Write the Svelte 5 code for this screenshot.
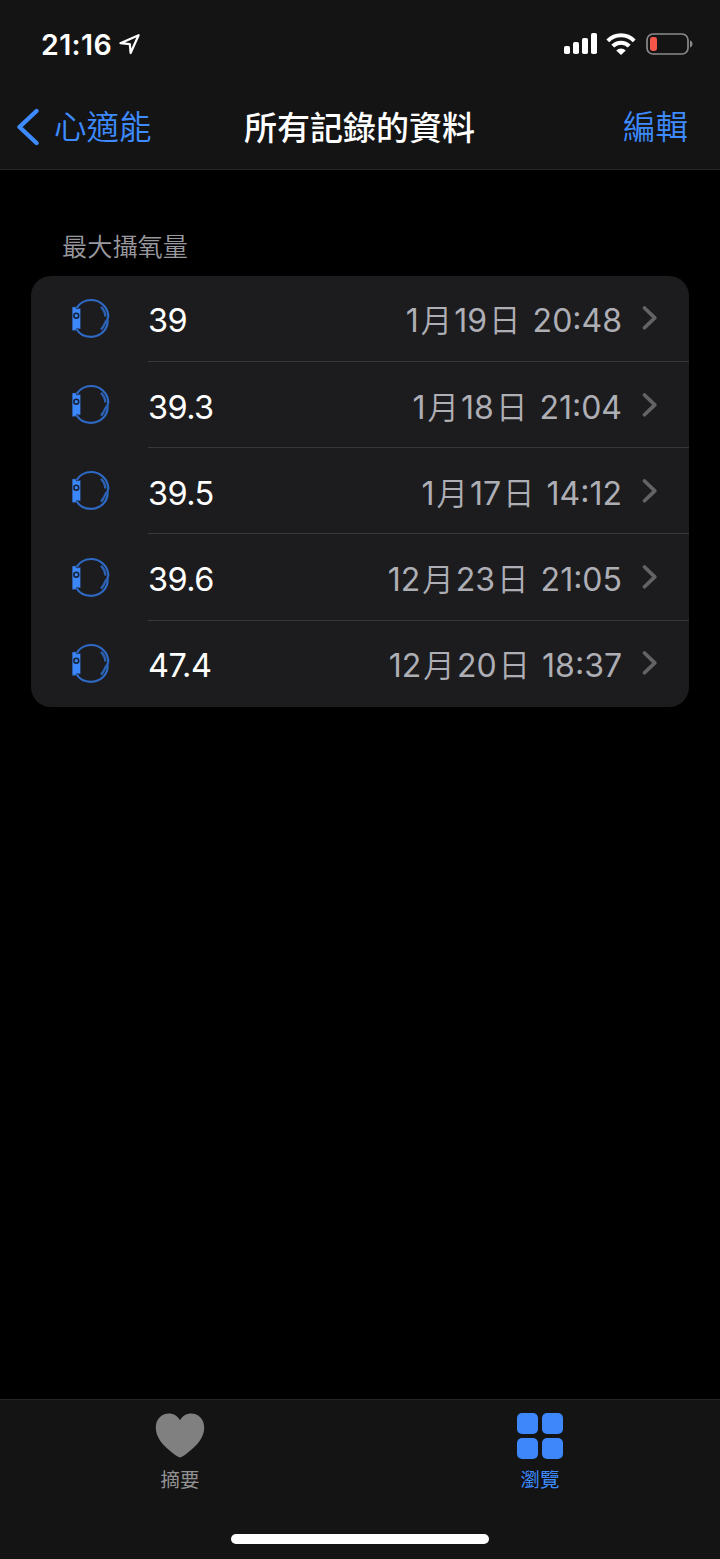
<script lang="ts">
  interface Sample {
    value: string;
    month: number;
    day: number;
    time: string;
  }

  const samples: Sample[] = [
    { value: '39',   month: 1,  day: 19, time: '20:48' },
    { value: '39.3', month: 1,  day: 18, time: '21:04' },
    { value: '39.5', month: 1,  day: 17, time: '14:12' },
    { value: '39.6', month: 12, day: 23, time: '21:05' },
    { value: '47.4', month: 12, day: 20, time: '18:37' },
  ];
</script>

<div class="screen">
  <header>
    <div class="status">
      <span class="clock">21:16</span>
      <svg class="location" width="22" height="22" viewBox="0 0 22 22">
        <path d="M1.4 10.2 19.6 2.2 11.6 20 10.8 11.2Z" />
      </svg>
      <svg class="signal" width="34" height="22" viewBox="0 0 34 22">
        <rect x="0" y="13" width="6" height="8" rx="1.8" />
        <rect x="9" y="9" width="6" height="12" rx="1.8" />
        <rect x="18" y="5" width="6" height="16" rx="1.8" />
        <rect x="27" y="0" width="6" height="21" rx="1.8" />
      </svg>
      <svg class="wifi" width="30" height="22" viewBox="0 0 30 22">
        <path d="M1.8 7.8A18.6 18.6 0 0 1 28.2 7.8" />
        <path d="M6.8 13.2A11.4 11.4 0 0 1 23.2 13.2" />
        <path class="dot" d="M10.2 17.4A7 7 0 0 1 19.8 17.4L15 22Z" />
      </svg>
      <svg class="battery" width="48" height="24" viewBox="0 0 48 24">
        <rect class="shell" x="1" y="2" width="41" height="20" rx="6" />
        <rect class="level" x="4" y="5" width="7" height="14" rx="2.4" />
        <path class="cap" d="M44 8.2Q46.600 9.500 46.600 12T44 15.8Z" />
      </svg>
    </div>
    <nav>
      <button class="back">
        <svg width="24" height="38" viewBox="0 0 24 38">
          <path d="M21.5 3 4.5 19 21.5 35" />
        </svg>
        <span>心適能</span>
      </button>
      <h1>所有記錄的資料</h1>
      <button class="edit">編輯</button>
    </nav>
  </header>

  <main>
    <h2>最大攝氧量</h2>
    <ul>
      {#each samples as s}
        <li>
          <svg class="watch" width="40" height="42" viewBox="0 0 40 42">
            <path class="band" d="M5.500 10.200C8.500 5 14.500 2 20 2C29.500 2 36.800 9.500 37.300 17.800C37.400 19.600 36 20.500 36.600 22.500C37 31.500 29.500 38.800 20 38.800C14.500 38.800 8.500 36.500 5.500 31" />
            <path class="clasp" d="M30 8.8C32.8 11.5 34.3 15 34.3 18.5M36.6 21.8C33 24 34.5 27 30 31.6" />
            <path class="case" d="M1.200 9H3.400L4.200 8.400 5.600 11 9.500 10.300V31L5.600 30.400 4.400 32.800 3.400 32.400H1.200Z" />
            <circle class="crown" cx="5.3" cy="17.7" r="2.4" />
          </svg>
          <div class="cell">
            <span class="value">{s.value}</span>
            <span class="date">{s.month}<b>月</b>{s.day}<b>日</b> {s.time}</span>
            <svg class="chevron" width="16" height="26" viewBox="0 0 16 26">
              <path d="M2.5 3 12.8 12.9 2.5 22.8" />
            </svg>
          </div>
        </li>
      {/each}
    </ul>
  </main>

  <footer>
    <div class="tabs">
      <div class="tab">
        <svg width="50" height="48" viewBox="0 0 50 48">
          <path d="M25 45.5C23.5 45.5 20.5 43.2 17 40.5C8 33.5 .8 25.5 .8 15.5C.8 7.3 6.5 1.5 13.8 1.5C18.7 1.5 22.8 4 25 8.3C27.2 4 31.3 1.5 36.2 1.5C43.5 1.5 49.2 7.3 49.2 15.5C49.2 25.5 42 33.5 33 40.5C29.5 43.2 26.5 45.5 25 45.5Z" />
        </svg>
        <span>摘要</span>
      </div>
      <div class="tab active">
        <svg width="50" height="48" viewBox="0 0 50 48">
          <rect x="2" y="1" width="21" height="21" rx="5" />
          <rect x="27" y="1" width="21" height="21" rx="5" />
          <rect x="2" y="26" width="21" height="21" rx="5" />
          <rect x="27" y="26" width="21" height="21" rx="5" />
        </svg>
        <span>瀏覽</span>
      </div>
    </div>
    <div class="home"></div>
  </footer>
</div>

<style>
  :global(body) { margin: 0; background: #000; }
  .screen {
    width: 720px; height: 1559px; box-sizing: border-box;
    display: flex; flex-direction: column; overflow: hidden;
    background: #000; color: #fff;
    font-family: Inter, "Noto Sans CJK TC", sans-serif;
  }
  svg { display: block; flex: none; }
  button { border: 0; padding: 0; background: none; font: inherit; color: #3d8bff; }

  header {
    height: 170px; box-sizing: border-box;
    background: #141414; border-bottom: 1px solid #262627;
  }
  .status { display: flex; align-items: center; height: 88px; padding: 0 26px 0 41px; }
  .clock { font-size: 28.5px; font-weight: 600; letter-spacing: .4px; padding-top: 1px; }
  .location { margin-left: 7px; fill: none; stroke: #fff; stroke-width: 2.2; stroke-linejoin: round; }
  .signal { margin-left: auto; fill: #fff; }
  .wifi { margin-left: 8px; fill: none; stroke: #fff; stroke-width: 4; }
  .wifi .dot { fill: #fff; stroke: none; }
  .battery { margin-left: 10px; }
  .shell { fill: none; stroke: #8a8a8a; stroke-width: 1.7; }
  .level { fill: #f4564a; }
  .cap { fill: #8a8a8a; }

  nav {
    display: grid; grid-template-columns: 1fr auto 1fr; align-items: center;
    height: 78px; padding: 0 32px 0 15px;
  }
  .back { display: flex; align-items: center; gap: 15px; justify-self: start; }
  .back span, .edit { padding-top: 2px; font-size: 32.5px; font-weight: 350; line-height: 48px; }
  .back path { fill: none; stroke: #3d8bff; stroke-width: 4.4; stroke-linecap: round; stroke-linejoin: round; }
  .edit { justify-self: end; }
  h1 { margin: 0 -8px 0 8px; padding-top: 2px; font-size: 33px; font-weight: 500; line-height: 48px; }

  main { flex: 1; padding: 57px 31px 0; }
  h2 {
    margin: 0 0 8.6px 31px; font-size: 25.2px; line-height: 40px;
    font-weight: 350; color: #98989e;
  }
  ul { margin: 0; padding: 0; list-style: none; background: #1c1c1e; border-radius: 20px; overflow: hidden; }
  li { display: flex; height: 86.3px; padding-left: 40px; }
  .watch { margin-top: 22.3px; fill: none; }
  .band { stroke: #2e69c4; stroke-width: 2.2; }
  .clasp { stroke: #2b60b2; stroke-width: 2.4; }
  .case { fill: #3c87fa; stroke: #1c2b48; stroke-width: .4; }
  .crown { fill: #3c87fa; stroke: #17233a; stroke-width: 1.6; }
  .cell {
    flex: 1; display: flex; align-items: center; box-sizing: border-box;
    margin-left: 37px; padding: 4px 31px 0 0; border-bottom: 1px solid #38383a;
  }
  li:last-child .cell { border-bottom-color: transparent; }
  .value { padding-top: 1px; font-size: 32.5px; font-weight: 370; letter-spacing: -.6px; }
  .date { margin: -4px 0 0 auto; font-size: 32px; font-weight: 380; color: #aeaeb5; letter-spacing: 0; word-spacing: 1px; }
  .date b { margin: 0 2px; font-size: 31.5px; font-weight: 350; }
  .chevron { margin: -4px 0 0 20px; fill: none; stroke: #636366; stroke-width: 3.6; stroke-linecap: round; stroke-linejoin: round; }

  footer { height: 160px; box-sizing: border-box; background: #141414; border-top: 1px solid #262627; }
  .tabs { display: flex; height: 134px; }
  .tab { flex: 1; display: flex; flex-direction: column; align-items: center; padding-top: 12px; color: #929292; }
  .tab svg { fill: #808080; }
  .tab span { margin-top: 6px; font-size: 19.5px; line-height: 28px; }
  .tab.active { color: #3d8bff; }
  .tab.active svg { fill: #3d87fb; }
  .home { width: 258px; height: 10px; margin: 0 auto; border-radius: 5px; background: #fff; }
</style>
